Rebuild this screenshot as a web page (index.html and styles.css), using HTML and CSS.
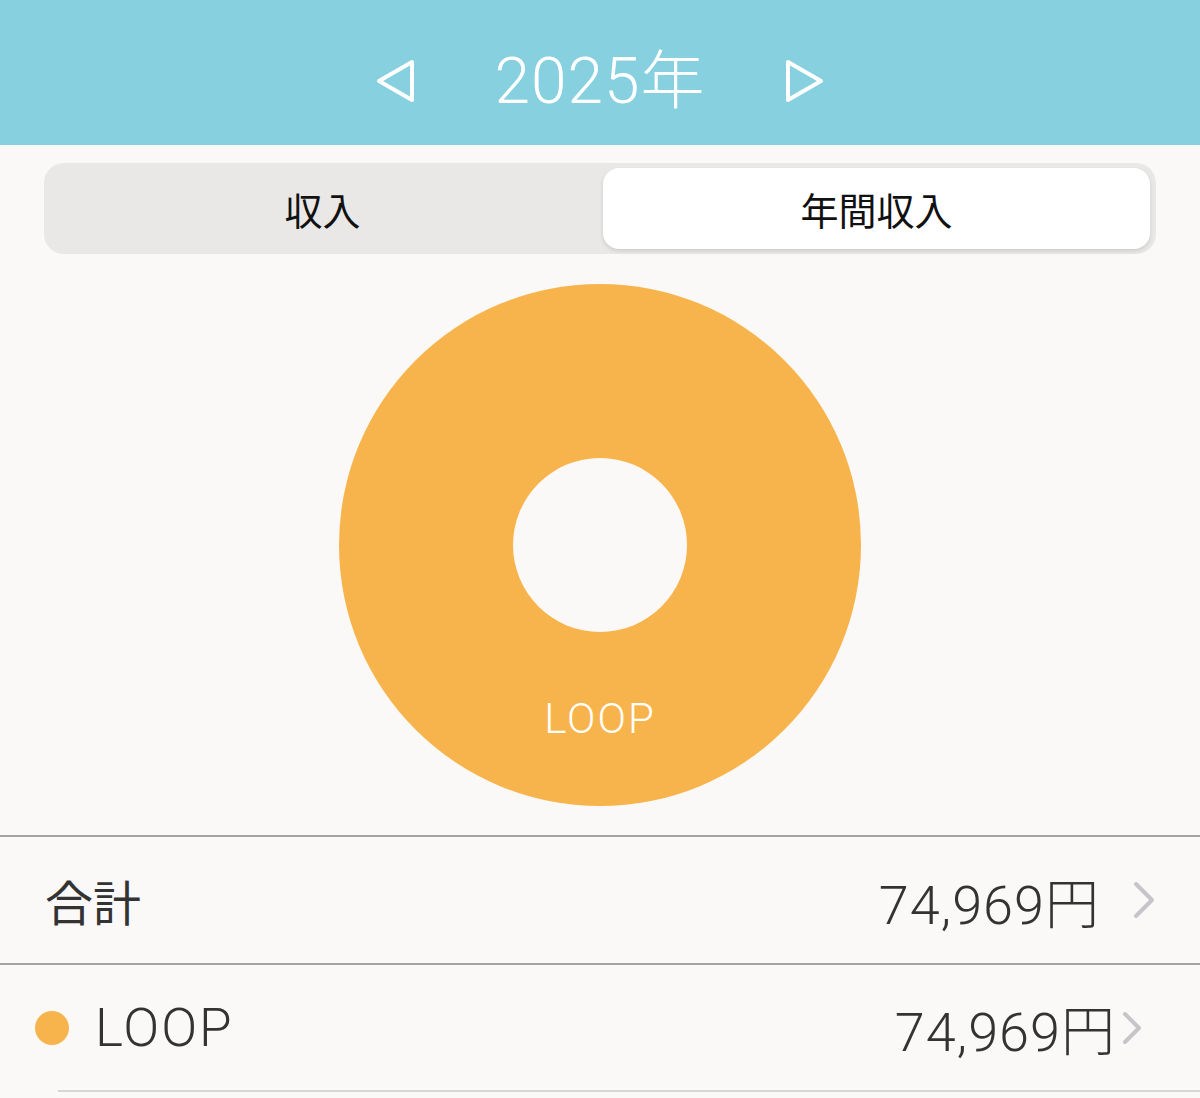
FILE: index.html
```html
<!DOCTYPE html>
<html>

<head>
  <meta charset="UTF-8" />
  <link rel="stylesheet" href="styles.css">
</head>

<body>
  <div class="header">
    <span class="nav-btn">
      <svg width="42" height="46" viewBox="0 0 42 46">
        <path d="M4 23 L37 4 L37 42 Z" fill="none" stroke="#fff" stroke-width="4" stroke-linejoin="round" />
      </svg>
    </span>
    <span class="title">2025年</span>
    <span class="nav-btn">
      <svg width="42" height="46" viewBox="0 0 42 46">
        <path d="M38 23 L5 4 L5 42 Z" fill="none" stroke="#fff" stroke-width="4" stroke-linejoin="round" />
      </svg>
    </span>
  </div>

  <div class="segment">
    <div class="seg-item">収入</div>
    <div class="seg-item active">年間収入</div>
  </div>

  <div class="chart">
    <div class="donut">
      <div class="hole"></div>
      <span class="donut-label">LOOP</span>
    </div>
  </div>

  <div class="row total">
    <span class="name">合計</span>
    <span class="amount">74,969円</span>
    <svg class="chev" width="24" height="38" viewBox="0 0 24 38">
      <path d="M4 3 L20 19 L4 35" fill="none" stroke="#c6c6ca" stroke-width="4" stroke-linecap="round" stroke-linejoin="round" />
    </svg>
  </div>

  <div class="row item">
    <span class="dot"></span>
    <span class="name">LOOP</span>
    <span class="amount">74,969円</span>
    <svg class="chev" width="20" height="34" viewBox="0 0 20 34">
      <path d="M3 3 L17 17 L3 31" fill="none" stroke="#c6c6ca" stroke-width="4" stroke-linecap="round" stroke-linejoin="round" />
    </svg>
  </div>
</body>

</html>
```

FILE: styles.css
```css
html,
body {
  margin: 0;
  padding: 0;
}

body {
  width: 1200px;
  height: 1098px;
  overflow: hidden;
  background-color: #faf9f7;
  font-family: Roboto, "Noto Sans CJK JP", sans-serif;
  color: #333;
}

/* 头部 年份切换 */
.header {
  height: 145px;
  background-color: #86d0e0;
  display: flex;
  align-items: center;
  justify-content: center;
}

.nav-btn {
  display: flex;
  width: 42px;
  height: 46px;
  margin-top: 16px;
}

.title {
  width: 366px;
  text-align: center;
  color: #fff;
  font-size: 64px;
  font-weight: 300;
  letter-spacing: 1px;
  margin-top: 4px;
}

/* 收入 / 年間收入 */
.segment {
  margin: 18px 44px 0;
  height: 91px;
  box-sizing: border-box;
  padding: 5px 6px 5px 5px;
  background-color: #e9e8e6;
  border-radius: 20px;
  display: flex;
  gap: 7px;
}

.seg-item {
  flex: 1;
  display: flex;
  align-items: center;
  justify-content: center;
  font-size: 38px;
  color: #111;
  font-family: "Noto Sans CJK JP", sans-serif;
}

.seg-item.active {
  background-color: #fff;
  border-radius: 16px;
  box-shadow: 0 2px 4px rgba(0, 0, 0, .12);
}

/* 圆环图 */
.chart {
  height: 581px;
  display: flex;
  align-items: center;
  justify-content: center;
}

.donut {
  position: relative;
  width: 522px;
  height: 522px;
  border-radius: 50%;
  background-color: #f8b44c;
  display: flex;
  align-items: center;
  justify-content: center;
  margin-top: 1px;
}

.hole {
  width: 174px;
  height: 174px;
  border-radius: 50%;
  background-color: #faf9f7;
}

.donut-label {
  position: absolute;
  left: 0;
  right: 0;
  top: 410px;
  text-align: center;
  color: #fff;
  font-size: 42px;
  font-weight: 300;
  letter-spacing: 2px;
}

/* 列表 */
.row {
  height: 128px;
  display: flex;
  align-items: center;
  border-top: 2px solid #a3a3a3;
  box-sizing: border-box;
}

.row.total {
  padding: 0 44px 0 45px;
}

.row .name {
  flex: 1;
}

.total .name {
  font-size: 48px;
  font-family: "Noto Sans CJK JP", sans-serif;
}

.amount {
  font-size: 54px;
  font-weight: 300;
  letter-spacing: 1px;
}

.total .chev {
  margin-left: 32px;
}

.row.item {
  position: relative;
  padding: 0 58px 0 35px;
}

.row.item::after {
  content: "";
  position: absolute;
  left: 58px;
  right: 0;
  bottom: -1px;
  border-bottom: 2px solid #d6d6d6;
}

.dot {
  width: 34px;
  height: 34px;
  border-radius: 50%;
  background-color: #f8b44c;
  margin-right: 26px;
}

.item .name {
  font-size: 53px;
  font-weight: 300;
  letter-spacing: 2px;
  margin-top: -1px;
}

.item .amount {
  margin-top: -2px;
}

.item .chev {
  margin-left: 6px;
}
```
